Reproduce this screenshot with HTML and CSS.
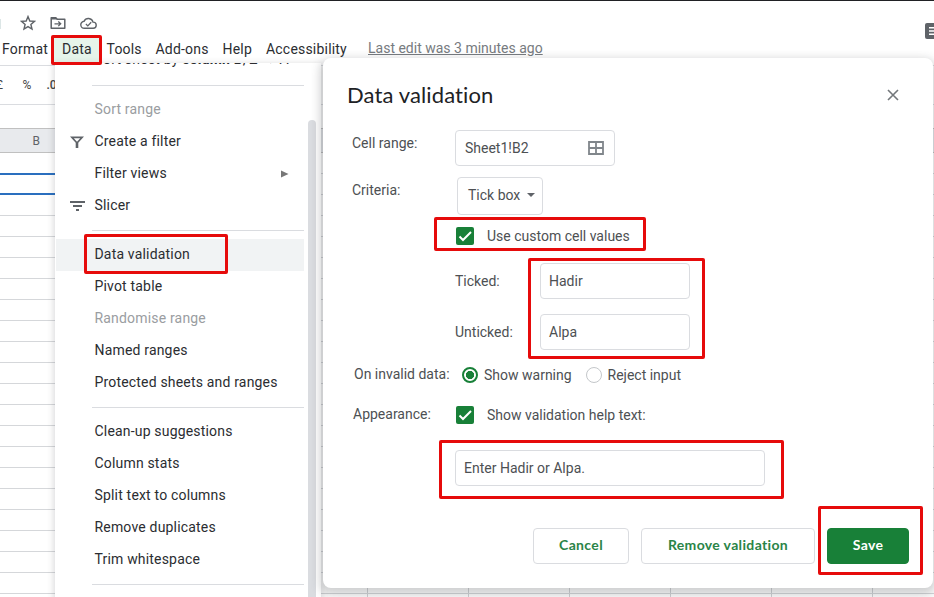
FILE: index.html
```html
<!DOCTYPE html>
<html lang="en">
<head>
<meta charset="utf-8">
<title>Data validation</title>
<link rel="stylesheet" href="styles.css">
</head>
<body>
<div class="app">
  <header class="doc-bar">
    <span class="edge-mark"></span>
    <svg class="i-star" width="16" height="16" viewBox="0 0 16 16"><path d="M8 1.6 9.8 6l4.7.4-3.6 3.1 1.1 4.6L8 11.6l-4 2.5 1.100-4.600L1.500 6.400 6.200 6Z" fill="none" stroke="#5f6368" stroke-width="1.4"/></svg>
    <svg class="i-move" width="16" height="16" viewBox="0 0 16 16"><path d="M1.200 2.700h4.600l1.500 1.600h7.500v9H1.200Z" fill="none" stroke="#5f6368" stroke-width="1.500" stroke-linejoin="round"/><path d="M1 2.500h5l1.500 2H1Z" fill="#5f6368"/><path d="M4.500 8.800h6M8.300 6.500l2.400 2.300-2.400 2.300" fill="none" stroke="#5f6368" stroke-width="1.300"/></svg>
    <svg class="i-cloud" width="17" height="16" viewBox="0 0 17 16"><path d="M4.500 13.300a3.500 3.500 0 0 1-.4-7A4.700 4.700 0 0 1 13 7.100a3.100 3.100 0 0 1 .2 6.200Z" fill="none" stroke="#5f6368" stroke-width="1.400"/><path d="m5.900 9 1.900 1.900 3.400-3.600" fill="none" stroke="#5f6368" stroke-width="1.300"/></svg>
    <svg class="i-comment" width="9" height="16" viewBox="0 0 9 16"><path d="M2 0h7v16H2Q0 16 0 14V2Q0 0 2 0Z" fill="#5f6368"/><path d="M4 4.800h5M4 8h5M4 11.200h5" stroke="#fff" stroke-width="1.600"/></svg>
  </header>
  <nav class="menubar">
    <span class="m-format">Format</span><span class="m-data">Data</span><span class="m-tools">Tools</span><span class="m-addons">Add-ons</span><span class="m-help">Help</span><span class="m-access">Accessibility</span><a class="last-edit">Last edit was 3 minutes ago</a>
  </nav>
  <div class="toolbar"><span class="t-pound">£</span><span class="t-pct">%</span><span class="t-dec">.0</span></div>
  <div class="formula"></div>
  <div class="colhead"><span>B</span></div>
  <div class="grid"></div>
</div>

<div class="menu">
  <div class="menu-list">
    <div class="item first">Sort sheet by&nbsp;<b>column B</b>, Z → A</div>
    <hr>
    <div class="item off">Sort range</div>
    <div class="item"><svg class="ic" width="14" height="12" viewBox="0 0 14 12"><path d="M0 .5h14L8.300 6.800V12H5.700V6.800Z" fill="#5f6368"/><path d="M3.800 2.300h6.400L7 5.800Z" fill="#fff"/></svg>Create a filter</div>
    <div class="item">Filter views<svg class="arrow" width="8" height="8" viewBox="0 0 8 8"><path d="M0 .5 7.500 4 0 7.500Z" fill="#777"/></svg></div>
    <div class="item"><svg class="ic slicer" width="15" height="10" viewBox="0 0 15 10"><path d="M0 1h15M3 5h9M6 9h3" stroke="#5f6368" stroke-width="1.800"/></svg>Slicer</div>
    <hr>
    <div class="item active">Data validation</div>
    <div class="item">Pivot table</div>
    <div class="item off">Randomise range</div>
    <div class="item">Named ranges</div>
    <div class="item">Protected sheets and ranges</div>
    <hr>
    <div class="item">Clean-up suggestions</div>
    <div class="item">Column stats</div>
    <div class="item">Split text to columns</div>
    <div class="item">Remove duplicates</div>
    <div class="item">Trim whitespace</div>
    <hr>
  </div>
  <div class="scroll"></div>
</div>

<section class="dialog">
  <div class="head"><h1>Data validation</h1>
    <svg class="close" width="12" height="12" viewBox="0 0 12 12"><path d="m1 1 10 10M11 1 1 11" stroke="#73777b" stroke-width="1.600"/></svg></div>
  <div class="row r-range"><label>Cell range:</label>
    <div class="box range">Sheet1!B2<svg width="16" height="14" viewBox="0 0 16 14"><path d="M1 1h14v12H1ZM8 1v12M1 7h14" fill="none" stroke="#80868b" stroke-width="1.800"/></svg></div></div>
  <div class="row r-crit"><label>Criteria:</label>
    <div class="box select">Tick box<svg width="8" height="4" viewBox="0 0 8 4"><path d="M0 0h8L4 4Z" fill="#5f6368"/></svg></div></div>
  <div class="row r-check"><span class="tick"><svg width="18" height="18" viewBox="0 0 18 18"><path d="m3.500 9.500 3.500 3.500 8-8" fill="none" stroke="#fff" stroke-width="2"/></svg></span><span class="t-custom">Use custom cell values</span></div>
  <div class="row r-val"><label>Ticked:</label><div class="box val">Hadir</div></div>
  <div class="row r-val second"><label>Unticked:</label><div class="box val">Alpa</div></div>
  <div class="row r-radio"><label>On invalid data:</label><i class="radio on"></i><span class="t-warn">Show warning</span><i class="radio"></i><span class="t-reject">Reject input</span></div>
  <div class="row r-app"><label>Appearance:</label><span class="tick"><svg width="18" height="18" viewBox="0 0 18 18"><path d="m3.500 9.500 3.500 3.500 8-8" fill="none" stroke="#fff" stroke-width="2"/></svg></span><span class="t-show">Show validation help text:</span></div>
  <div class="row r-help"><div class="box help">Enter Hadir or Alpa.</div></div>
  <div class="actions"><button class="b-cancel">Cancel</button><button class="b-remove">Remove validation</button><button class="b-save">Save</button></div>
</section>

<div class="mark k-data"></div>
<div class="mark k-item"></div>
<div class="mark k-custom"></div>
<div class="mark k-values"></div>
<div class="mark k-help"></div>
<div class="mark k-save"></div>
</body>
</html>
```
FILE: styles.css
```css
* { box-sizing: border-box; }
body { margin: 0; width: 934px; height: 597px; overflow: hidden; position: relative; background: #fff; font: 14px/20px Roboto, sans-serif; color: #2b2d31; }
svg { display: block; flex: none; }
span, label { white-space: nowrap; }

.app { height: 597px; display: flex; flex-direction: column; overflow: hidden; }
.doc-bar { height: 38px; border-top: 1px solid #202124; display: flex; align-items: flex-start; padding-top: 14px; flex: none; }
.edge-mark { width: 1px; height: 10px; margin-top: 4px; background: #dce6e6; }
.i-star { margin-left: 19px; }
.i-move { margin-left: 13.500px; }
.i-cloud { margin-left: 14px; }
.i-comment { margin: 8px 0 0 auto; }
.menubar { height: 27px; flex: none; display: flex; align-items: flex-start; }
.menubar > * { flex: none; line-height: 22px; height: 25px; white-space: nowrap; letter-spacing: .2px; }
.m-format { width: 51px; padding-left: 2px; }
.m-data { width: 49px; padding-left: 11px; background: #e6f4ea; }
.m-tools { width: 48.500px; padding-left: 6.500px; }
.m-addons { width: 67px; padding-left: 7px; }
.m-help { width: 43.500px; padding-left: 7px; }
.m-access { width: 109px; padding-left: 7px; }
.menubar .last-edit { color: #777b80; text-decoration: underline; line-height: 21px; letter-spacing: 0; }
.toolbar { height: 40px; flex: none; border-top: 1px solid #dadce0; border-bottom: 1px solid #dadce0; display: flex; align-items: center; font-size: 12px; color: #444; }
.t-pound { margin-left: -4px; width: 26.500px; }
.t-pct { width: 24px; }
.t-dec { font-weight: 500; }
.formula { height: 23px; flex: none; }
.colhead { height: 25px; flex: none; border-top: 1px solid #c0c0c0; border-bottom: 1px solid #c0c0c0; background: #e8eaed; font-size: 12px; line-height: 24px; color: #5f6368; padding-left: 32.500px; }
.grid {
  flex: 1;
  background:
    linear-gradient(#2a6fbf, #2a6fbf) 0 20px / 60px 2px no-repeat,
    linear-gradient(#2a6fbf, #2a6fbf) 0 40px / 60px 2px no-repeat,
    repeating-linear-gradient(to bottom, transparent 0 20px, #d5d7da 20px 21px),
    repeating-linear-gradient(to right, transparent 0 100px, #d0d2d5 100px 101px) 65px 0 / 1010px 100% repeat-x;
}

.menu { position: absolute; left: 55px; top: 63px; width: 266px; height: 540px; background: #fff; box-shadow: 0 2px 6px 2px rgba(60,64,67,.16); overflow: clip; display: flex; }
.menu-list { width: 249px; margin-top: -18px; }
.item { height: 32px; padding-left: 38.500px; margin-left: 1px; display: flex; align-items: center; letter-spacing: .18px; line-height: 30px; padding-bottom: 2px; white-space: nowrap; }
.first { padding-bottom: 4px; }
.item b { font-weight: 700; }
.off { color: #9a9da1; }
.active { background: #f1f3f4; }
.ic { margin-left: -25px; margin-right: 11px; margin-top: 2px; }
.slicer { margin-right: 10px; }
.arrow { margin-left: auto; margin-right: 15px; margin-top: 2px; }
hr { border: 0; height: 1px; background: #dadce0; margin: 8px 0 8px 37px; }
.scroll { width: 8px; margin: 57px 0 0 4px; border-radius: 4px 4px 0 0; background: #dadce0; }

.dialog { position: absolute; left: 323px; top: 58px; width: 610px; height: 530px; background: #fff; border-radius: 8px; box-shadow: 0 4px 10px 3px rgba(60,64,67,.24); color: #4d5053; }
.head { height: 72px; display: flex; align-items: center; justify-content: space-between; padding: 2px 34px 0 24px; }
h1 { margin: 0; font: 400 22px/30px Lato, sans-serif; color: #202124; letter-spacing: .12px; }
.row { display: flex; align-items: flex-start; }
.box { border: 1px solid #dadce0; border-radius: 4px; height: 36px; display: flex; align-items: center; white-space: nowrap; }
.r-range { padding-left: 29px; height: 47px; }
.r-range label, .r-crit label { width: 103px; margin-top: 3px; }
.range { width: 160px; padding: 0 10px 0 9px; justify-content: space-between; }
.r-crit { padding-left: 29px; height: 50px; }
.r-crit label { width: 105px; }
.select { width: 86px; height: 38px; padding: 0 7px 2px 10px; justify-content: space-between; }
.r-check { padding-left: 133px; height: 36px; }
.tick { width: 18px; height: 18px; background: #188038; border-radius: 2px; flex: none; }
.t-custom, .t-show { margin: -1px 0 0 13px; }
.r-val { padding-left: 132px; height: 51px; }
.r-val label { width: 85px; margin-top: 8px; }
.val { width: 150px; padding-left: 8px; }
.r-val.second { height: 39px; }
.r-radio { height: 40px; align-items: center; margin-top: 2px; padding-left: 31px; }
.r-radio label { width: 108px; margin-top: -2px; }
.radio { width: 16px; height: 16px; border: 1px solid #c4c7ca; border-radius: 50%; flex: none; }
.radio.on { border: 2px solid #188038; background: radial-gradient(circle, #188038 0 3.800px, transparent 4.400px); }
.t-warn { width: 108px; padding-left: 6px; }
.t-reject { padding-left: 5.500px; }
.r-app { padding-left: 30px; height: 55px; padding-top: 11px; }
.r-app label { width: 103px; margin-top: -2px; }
.r-help { padding-left: 132px; height: 78px; }
.help { width: 310px; padding-left: 8px; }
.actions { display: flex; gap: 12px; padding-left: 210px; }
button { height: 36px; padding: 0 0 2px; border: 1px solid #dadce0; border-radius: 4px; background: #fff; color: #2a8447; font: 700 14px/20px Lato, sans-serif; letter-spacing: .35px; }
.b-cancel { width: 96px; }
.b-remove { width: 174px; }
.b-save { width: 82px; background: #188038; border-color: #188038; color: #fff; }

.mark { position: absolute; border: 3px solid #e60b0b; border-radius: 2px; }
.k-data { left: 51px; top: 35px; width: 51px; height: 30px; }
.k-item { left: 84px; top: 234px; width: 144px; height: 40px; }
.k-custom { left: 434px; top: 217px; width: 212px; height: 34px; }
.k-values { left: 528px; top: 258px; width: 177px; height: 101px; }
.k-help { left: 439px; top: 440px; width: 345px; height: 59px; }
.k-save { left: 818px; top: 506px; width: 105px; height: 69px; }
```
